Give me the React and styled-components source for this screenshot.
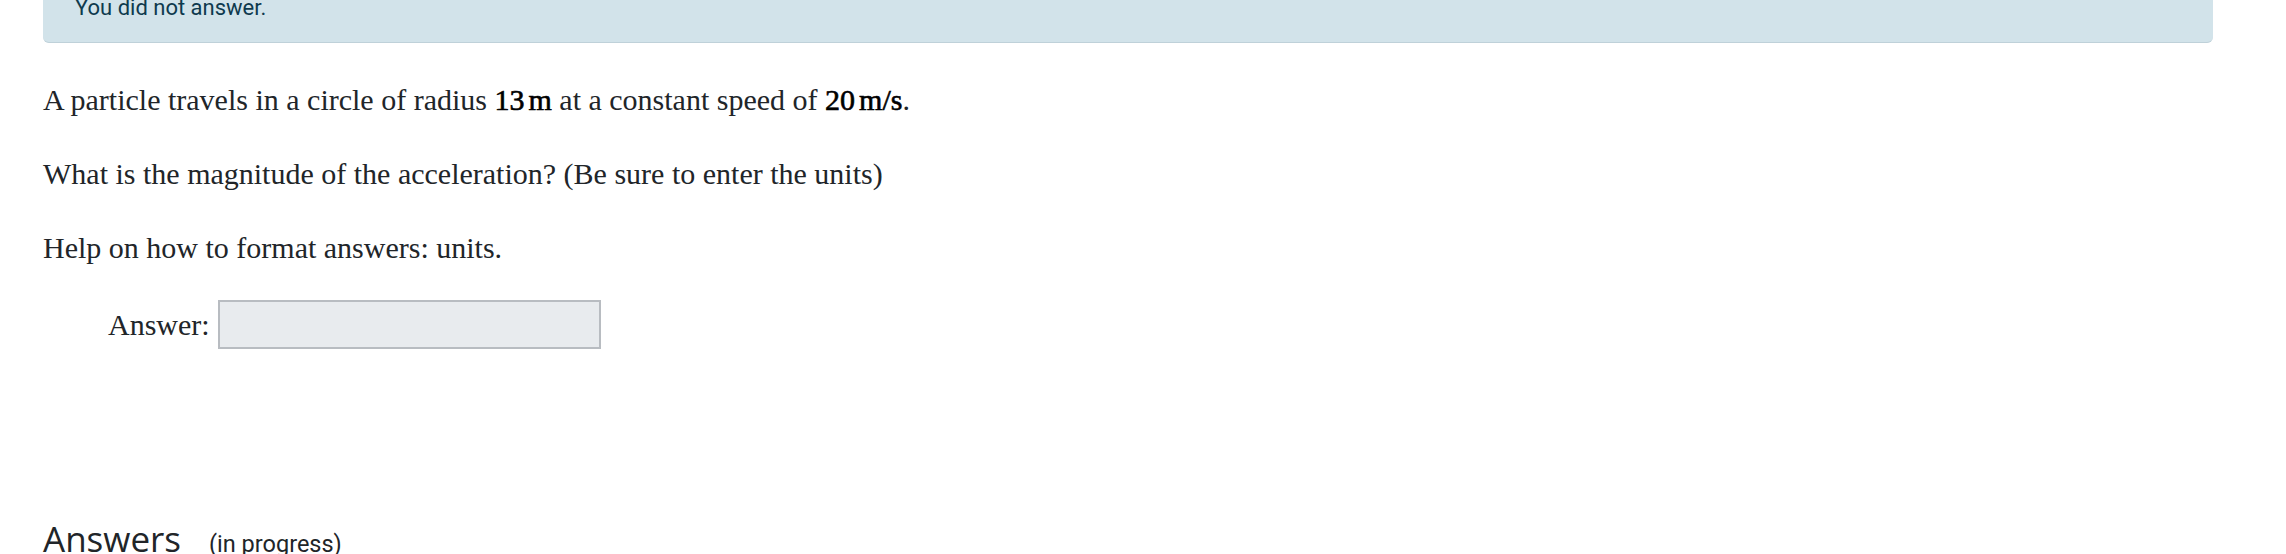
import styled, { createGlobalStyle } from "styled-components";

const GlobalStyle = createGlobalStyle`
  html, body {
    margin: 0;
    padding: 0;
    background: #fff;
  }
  body {
    font-family: "Liberation Serif", "Times New Roman", serif;
    color: #212529;
    overflow: hidden;
  }
`;

const Page = styled.main`
  padding: 0 73px 0 43px;
`;

const Alert = styled.div`
  margin-top: -30px;
  padding: 21px 32px 18px;
  background: #d2e3ea;
  border-bottom: 1px solid #bfd1d9;
  border-radius: 0 0 6px 6px;
  font-family: Roboto, "Liberation Sans", sans-serif;
  font-size: 22px;
  line-height: 33px;
  color: #0e3a4e;
`;

const Problem = styled.section`
  margin-top: 35px;
`;

const Para = styled.p`
  margin: 0 0 30px;
  font-size: 30px;
  line-height: 44px;
`;

// MathJax quantities render a touch heavier than the body text
const Quantity = styled.span`
  color: #000;
  -webkit-text-stroke: 0.6px #000;
  white-space: nowrap;
`;

const Unit = styled.span`
  margin-left: 4px;
`;

const AnswerRow = styled.div`
  display: flex;
  align-items: center;
  gap: 8px;
  padding-left: 65px;
`;

const Label = styled.label`
  font-size: 30px;
  line-height: 44px;
`;

const AnswerInput = styled.input`
  box-sizing: border-box;
  width: 383px;
  height: 49px;
  margin: 0;
  background: #e8ebee;
  border: 2px solid #b8bcc1;
  border-radius: 0;
  font-size: 22px;
`;

const Heading = styled.div`
  display: flex;
  align-items: baseline;
  gap: 28px;
  margin-top: 169px;
`;

const Title = styled.h2`
  margin: 0;
  font-family: "Open Sans", "Liberation Sans", sans-serif;
  font-weight: 400;
  font-size: 35px;
  line-height: 42px;
  color: #212529;
`;

const Status = styled.span`
  font-family: Roboto, "Liberation Sans", sans-serif;
  font-size: 23.5px;
  color: #212529;
`;

const Measure = ({ value, unit }) => (
  <Quantity>
    {value}
    <Unit>{unit}</Unit>
  </Quantity>
);

export default function App() {
  return (
    <>
      <GlobalStyle />
      <Page>
        <Alert>You did not answer.</Alert>
        <Problem>
          <Para>
            A particle travels in a circle of radius{" "}
            <Measure value="13" unit="m" /> at a constant speed of{" "}
            <Measure value="20" unit="m/s" />.
          </Para>
          <Para>
            What is the magnitude of the acceleration? (Be sure to enter the
            units)
          </Para>
          <Para>Help on how to format answers: units.</Para>
          <AnswerRow>
            <Label htmlFor="answer">Answer:</Label>
            <AnswerInput id="answer" type="text" />
          </AnswerRow>
        </Problem>
        <Heading>
          <Title>Answers</Title>
          <Status>(in progress)</Status>
        </Heading>
      </Page>
    </>
  );
}
